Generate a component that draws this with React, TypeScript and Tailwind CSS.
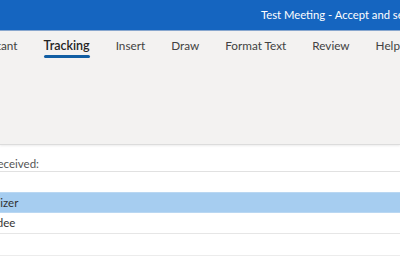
import React from 'react';

const tabs = ['Scheduling Assistant', 'Tracking', 'Insert', 'Draw', 'Format Text', 'Review', 'Help'];

const App: React.FC = () => {
  return (
    <div className="w-[400px] h-[260px] overflow-hidden bg-white font-['Lato',sans-serif]">
      {/* Title bar */}
      <div className="h-[31px] bg-[#1565c0] flex items-center border-b border-[#8aa8cf]">
        <div className="ml-[261px] whitespace-nowrap text-[11.25px] text-white">
          Test Meeting - Accept and send
        </div>
      </div>

      {/* Tabs */}
      <div className="bg-[#f3f2f1] h-[114px] border-b border-[#dcdcdc] shadow-[0_1px_2px_rgba(0,0,0,0.08)]">
        <div className="flex items-start h-[29px] pt-[6px] ml-[-88px] whitespace-nowrap text-[11.75px] text-[#424242]">
          {tabs.map((t) => (
            <div key={t} className="mr-[26px] flex flex-col items-center">
              <span className={t === 'Tracking' ? 'font-semibold text-[12.5px] leading-[17px] text-[#242424]' : 'leading-[17px]'}>{t}</span>
              {t === 'Tracking' && <span className="mt-[1px] h-[3px] w-full rounded-full bg-[#115ea3]" />}
            </div>
          ))}
        </div>
      </div>

      {/* Tracking list */}
      <div className="mt-[2px] text-[11.5px] text-[#555]">
        <div className="h-[25px] pt-[9px] flex items-center border-b border-[#e1e1e1] overflow-hidden">
          <span className="ml-[-186px] whitespace-nowrap">The following responses have been received:</span>
        </div>
        <div className="h-[20px] border-b border-transparent" />
        <div className="h-[21px] flex items-center bg-[#a6cdf0] border-t border-[#b9d7f2] border-b border-[#8aa9c8] overflow-hidden text-[#333]">
          <span className="ml-[-31px] whitespace-nowrap">Organizer</span>
        </div>
        <div className="h-[21px] flex items-center border-b border-[#e6e6e6] overflow-hidden text-[#333]">
          <span className="ml-[-31px] whitespace-nowrap">Attendee</span>
        </div>
        <div className="h-[22px] border-b border-[#ececec]" />
      </div>
    </div>
  );
};

export default App;
